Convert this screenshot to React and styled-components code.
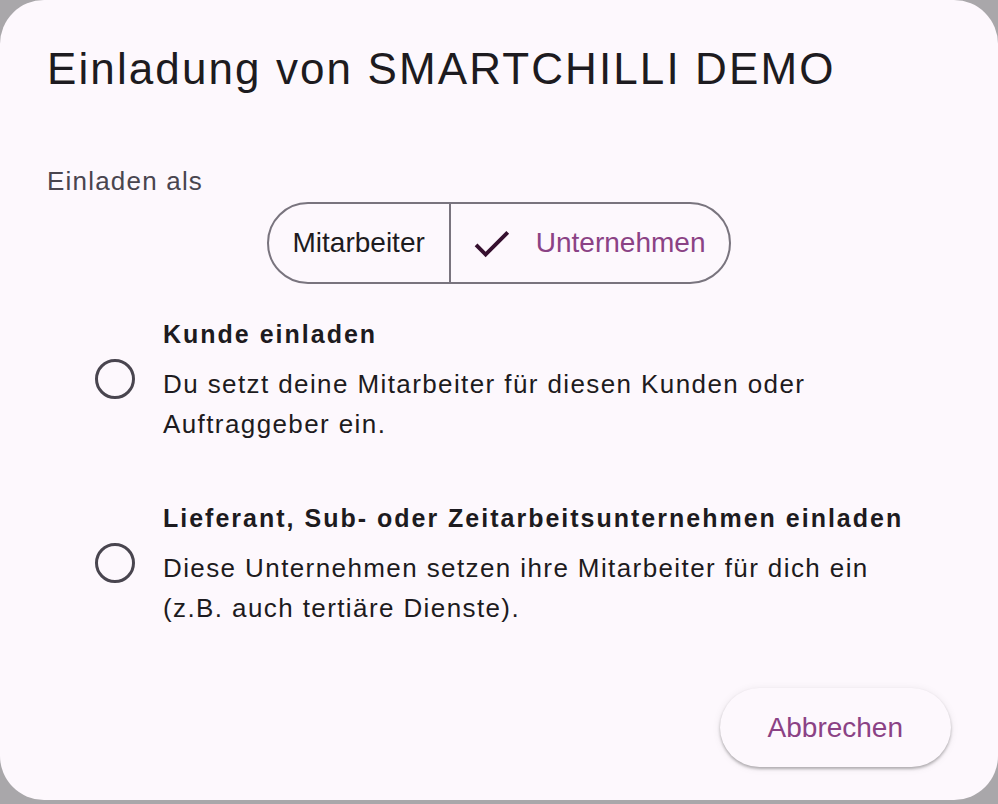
import React, { useState } from "react";
import styled, { createGlobalStyle } from "styled-components";

const Global = createGlobalStyle`
  html, body {
    margin: 0;
    padding: 0;
    background: #a9a7aa;
  }
  body {
    font-family: "Liberation Sans", Arial, Helvetica, sans-serif;
    -webkit-font-smoothing: antialiased;
  }
  * { box-sizing: border-box; }
`;

const Dialog = styled.div`
  width: 998px;
  height: 800px;
  background: #fdf8fd;
  border-radius: 44px;
  padding: 44px 47px 33px 47px;
  display: flex;
  flex-direction: column;
`;

const Title = styled.h1`
  margin: 0;
  font-size: 44px;
  line-height: 50px;
  font-weight: 400;
  letter-spacing: 2.1px;
  color: #1d1b20;
`;

const FieldLabel = styled.div`
  margin-top: 72px;
  font-size: 26px;
  line-height: 30px;
  letter-spacing: 1.2px;
  color: #49454f;
`;

const Segmented = styled.div`
  align-self: center;
  margin-top: 6px;
  display: flex;
  height: 82px;
  border: 2px solid #79747e;
  border-radius: 41px;
  overflow: hidden;
`;

const Segment = styled.button`
  display: flex;
  align-items: center;
  gap: 21px;
  height: 100%;
  padding: ${(p) => (p.$selected ? "0 24px 0 17px" : "0 24px 0 24px")};
  border: none;
  border-left: ${(p) => (p.$first ? "none" : "2px solid #79747e")};
  background: transparent;
  font-family: inherit;
  font-size: 28px;
  color: ${(p) => (p.$selected ? "#8b4285" : "#1d1b20")};
  cursor: pointer;
`;

const CheckIcon = styled.svg`
  width: 47px;
  height: 47px;
  flex: none;
`;

const Options = styled.div`
  margin-top: 30px;
  display: flex;
  flex-direction: column;
  gap: 54px;
`;

const Option = styled.label`
  display: flex;
  align-items: center;
  gap: 28px;
  padding: 0 32px 0 48px;
  cursor: pointer;
`;

const Radio = styled.span`
  flex: none;
  width: 40px;
  height: 40px;
  border-radius: 50%;
  border: 3.5px solid ${(p) => (p.$checked ? "#8b4285" : "#49454f")};
  display: flex;
  align-items: center;
  justify-content: center;

  &::after {
    content: "";
    width: 20px;
    height: 20px;
    border-radius: 50%;
    background: #8b4285;
    display: ${(p) => (p.$checked ? "block" : "none")};
  }
`;

const OptionText = styled.div`
  flex: 1;
  display: flex;
  flex-direction: column;
  gap: 10px;
`;

const OptionTitle = styled.div`
  font-size: 25px;
  line-height: 40px;
  font-weight: 700;
  letter-spacing: 2px;
  color: #1d1b20;
`;

const OptionBody = styled.div`
  font-size: 26px;
  line-height: 40px;
  letter-spacing: 1.4px;
  color: #1d1b20;
`;

const Actions = styled.div`
  margin-top: auto;
  display: flex;
  justify-content: flex-end;
`;

const TextButton = styled.button`
  height: 79px;
  padding: 0 48px;
  border: none;
  border-radius: 40px;
  background: #fdf8fd;
  box-shadow: 0 2px 3px rgba(0, 0, 0, 0.28), 0 1px 8px rgba(0, 0, 0, 0.08);
  font-family: inherit;
  font-size: 28px;
  color: #8b4285;
  cursor: pointer;
`;

const options = [
  {
    id: "kunde",
    title: "Kunde einladen",
    body: "Du setzt deine Mitarbeiter für diesen Kunden oder Auftraggeber ein.",
  },
  {
    id: "lieferant",
    title: "Lieferant, Sub- oder Zeitarbeitsunternehmen einladen",
    body: "Diese Unternehmen setzen ihre Mitarbeiter für dich ein (z.B. auch tertiäre Dienste).",
  },
];

function Check() {
  return (
    <CheckIcon viewBox="0 0 24 24">
      <path fill="#36102f" d="M9 16.17 4.83 12l-1.42 1.41L9 19 21 7l-1.41-1.41z" />
    </CheckIcon>
  );
}

export default function App() {
  const [mode, setMode] = useState("unternehmen");
  const [choice, setChoice] = useState(null);

  return (
    <>
      <Global />
      <Dialog>
        <Title>Einladung von SMARTCHILLI DEMO</Title>
        <FieldLabel>Einladen als</FieldLabel>
        <Segmented>
          <Segment
            $first
            $selected={mode === "mitarbeiter"}
            onClick={() => setMode("mitarbeiter")}
          >
            {mode === "mitarbeiter" && <Check />}
            Mitarbeiter
          </Segment>
          <Segment
            $selected={mode === "unternehmen"}
            onClick={() => setMode("unternehmen")}
          >
            {mode === "unternehmen" && <Check />}
            Unternehmen
          </Segment>
        </Segmented>
        <Options>
          {options.map((o) => (
            <Option key={o.id} onClick={() => setChoice(o.id)}>
              <Radio $checked={choice === o.id} />
              <OptionText>
                <OptionTitle>{o.title}</OptionTitle>
                <OptionBody>{o.body}</OptionBody>
              </OptionText>
            </Option>
          ))}
        </Options>
        <Actions>
          <TextButton>Abbrechen</TextButton>
        </Actions>
      </Dialog>
    </>
  );
}
